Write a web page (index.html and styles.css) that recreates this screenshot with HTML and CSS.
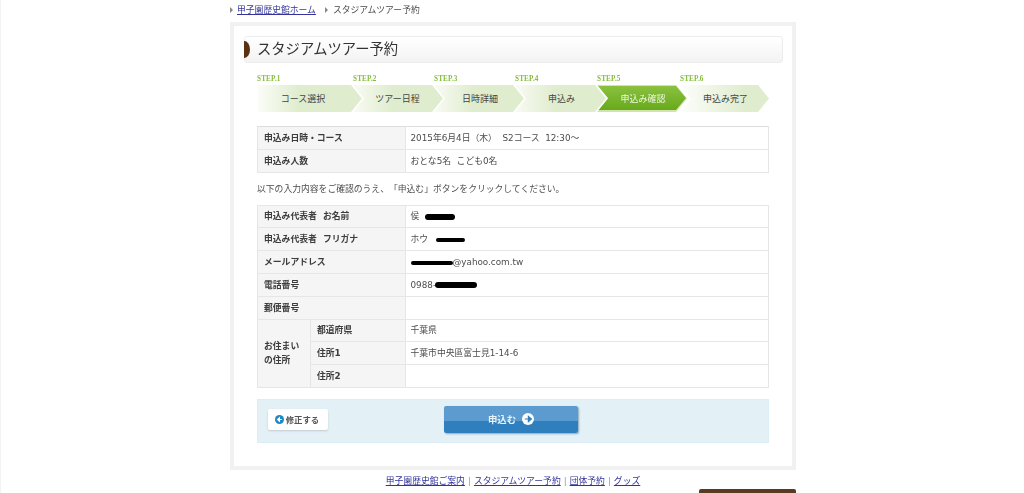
FILE: index.html
```html
<!DOCTYPE html>
<html lang="ja">
<head>
<meta charset="utf-8">
<title>スタジアムツアー予約</title>
<link rel="stylesheet" href="styles.css">
</head>
<body>
<div class="page">
  <nav class="crumbs">
    <span class="tri"></span><a href="#">甲子園歴史館ホーム</a>
    <span class="tri tri-second"></span><span>スタジアムツアー予約</span>
  </nav>
  <main class="card">
    <h1 class="title">スタジアムツアー予約</h1>
    <div class="body">
      <ol class="steps">
        <li class="step s1"><span class="step-label">STEP.1</span><span class="arrow first">コース選択</span></li>
        <li class="step s2"><span class="step-label">STEP.2</span><span class="arrow shift">ツアー日程</span></li>
        <li class="step s2"><span class="step-label">STEP.3</span><span class="arrow">日時詳細</span></li>
        <li class="step s4"><span class="step-label">STEP.4</span><span class="arrow">申込み</span></li>
        <li class="step s5"><span class="step-label">STEP.5</span><span class="arrow active">申込み確認</span></li>
        <li class="step s6"><span class="step-label">STEP.6</span><span class="arrow last">申込み完了</span></li>
      </ol>

      <table class="info first-table">
        <colgroup><col class="c-label"><col class="c-value"></colgroup>
        <tr><th>申込み日時・コース</th><td>2015年6月4日（木）&nbsp; S2コース&nbsp; 12:30～</td></tr>
        <tr><th>申込み人数</th><td>おとな5名&nbsp; こども0名</td></tr>
      </table>

      <p class="note">以下の入力内容をご確認のうえ、「申込む」ボタンをクリックしてください。</p>

      <table class="info">
        <colgroup><col class="c-group"><col class="c-sub"><col class="c-value"></colgroup>
        <tr><th colspan="2">申込み代表者&nbsp; お名前</th><td>侯<span class="blot b1"></span></td></tr>
        <tr><th colspan="2">申込み代表者&nbsp; フリガナ</th><td>ホウ<span class="blot b2"></span></td></tr>
        <tr><th colspan="2">メールアドレス</th><td><span class="blot b3"></span>@yahoo.com.tw</td></tr>
        <tr><th colspan="2">電話番号</th><td>0988-<span class="blot b4"></span></td></tr>
        <tr><th colspan="2">郵便番号</th><td></td></tr>
        <tr><th rowspan="3" class="group">お住まい<br>の住所</th><th>都道府県</th><td>千葉県</td></tr>
        <tr><th>住所1</th><td>千葉市中央區富士見1-14-6</td></tr>
        <tr><th>住所2</th><td></td></tr>
      </table>

      <div class="actions">
        <button class="back" type="button">
          <svg class="ico" viewBox="0 0 10 10" width="9" height="9"><circle cx="5" cy="5" r="5" fill="#1b87c9"/><path d="M7.6 5H4.4M5 3 2.8 5 5 7Z" fill="#fff" stroke="#fff" stroke-width="1.2"/></svg>
          修正する
        </button>
        <button class="submit" type="button">
          申込む
          <svg class="ico" viewBox="0 0 12 12" width="12" height="12"><circle cx="6" cy="6" r="6" fill="#fff"/><path d="M2.8 6H7M6.4 3.4 9.4 6 6.4 8.6Z" fill="#2f7fbf" stroke="#2f7fbf" stroke-width="1.2"/></svg>
        </button>
      </div>
    </div>
  </main>
  <footer class="links">
    <a href="#">甲子園歴史館ご案内</a><span class="sep">|</span><a href="#">スタジアムツアー予約</a><span class="sep">|</span><a href="#">団体予約</a><span class="sep">|</span><a href="#">グッズ</a>
  </footer>
  <div class="tail"></div>
</div>
</body>
</html>
```
FILE: styles.css
```css
* { box-sizing: border-box; }
html, body { margin: 0; padding: 0; height: 493px; overflow: hidden; background: #fff; }
body {
  border-left: 1px solid #f3f3f3;
  font-family: "DejaVu Sans", "Noto Sans CJK JP", sans-serif;
  font-size: 8.8px;
  color: #444;
  text-spacing-trim: space-all;
}
.page { width: 566px; margin-left: 229px; filter: blur(.3px); }
a { color: #33339a; text-decoration: underline; }

.crumbs { display: flex; align-items: center; height: 22px; padding-bottom: 3px; color: #4a4a4a; line-height: 12px; font-size: 8.8px; }
.tri { width: 0; height: 0; margin-right: 4px; border-left: 3px solid #888; border-top: 3px solid transparent; border-bottom: 3px solid transparent; }
.tri-second { margin-left: 9px; margin-right: 5px; }

.card { height: 448px; padding: 10px 9px 0 10px; border: 4px solid #f1f1f1; background: #fff; }
.title {
  position: relative;
  height: 27px;
  margin: 0;
  padding-left: 12px;
  border: 1px solid #ededed;
  border-radius: 3px;
  background: linear-gradient(#fff, #f3f3f3);
  font-size: 14.3px;
  font-weight: normal;
  line-height: 24px;
  color: #333;
}
.title::before {
  content: "";
  position: absolute;
  left: -1px;
  top: 4px;
  width: 6px;
  height: 17px;
  border-radius: 0 6px 6px 0 / 0 9px 9px 0;
  background: #5a3212;
}
.body { margin: 0 14px 0 13px; }

.steps { display: flex; margin: 12px 0 0; padding: 0; list-style: none; }
.step { display: flex; flex-direction: column; flex: none; }
.s1 { width: 96px; }
.s2 { width: 81px; }
.s4 { width: 82px; }
.s5 { width: 83px; }
.s6 { width: 89px; }
.step-label { height: 10px; font-family: "Liberation Serif", serif; font-size: 7.2px; font-weight: bold; line-height: 9px; letter-spacing: .15px; color: #84bd3a; }
.arrow {
  display: flex;
  align-items: center;
  justify-content: center;
  width: calc(100% + 9px);
  height: 27px;
  padding: 0 4px 0 6px;
  background: linear-gradient(90deg, #f9fbf4, #dfeccd 45%, #dfeccd);
  clip-path: polygon(0 0, calc(100% - 11px) 0, 100% 50%, calc(100% - 11px) 100%, 0 100%, 11px 50%);
  font-size: 9px;
  color: #444;
}
.first { clip-path: polygon(0 0, calc(100% - 11px) 0, 100% 50%, calc(100% - 11px) 100%, 0 100%); background: linear-gradient(90deg, #fbfdf8, #dfeccd 40%); margin-left: 1px; width: 104px; padding: 0 18px 0 4px; }
.shift { padding: 0 7px 0 6px; }
.last { width: 100%; background: linear-gradient(90deg, #fdfefb, #dfeccd 75%); }
.active {
  position: relative;
  z-index: 1;
  width: 90px;
  background: #cfe5ab;
  color: #eef6e0;
}
.active::before {
  content: "";
  position: absolute;
  inset: 1px 1px 2px 1px;
  z-index: -1;
  background: linear-gradient(#8ac13f, #68a91c);
  clip-path: polygon(0 0, calc(100% - 10px) 0, 100% 50%, calc(100% - 10px) 100%, 0 100%, 10px 50%);
}

.info { width: 100%; border-collapse: collapse; table-layout: fixed; }
.c-label { width: 148px; }
.c-group { width: 53px; }
.c-sub { width: 95px; }
.first-table { margin-top: 14px; }
.first-table tr:first-child > * { border-top: 1px solid #ddd; }
.info th, .info td { height: 22.8px; padding: 0 0 0 6px; border: 1px solid #e6e6e6; font-size: 8.8px; line-height: 14px; text-align: left; vertical-align: middle; }
.info th { background: #f5f5f5; font-weight: bold; color: #3d3d3d; }
.info td { padding-left: 4.5px; background: #fff; color: #4d4d4d; font-weight: normal; }

.note { display: flex; align-items: center; height: 32px; margin: 0; color: #4d4d4d; }

.blot { display: inline-block; height: 5px; background: #000; border-radius: 3px; vertical-align: middle; }
.b1 { width: 30px; height: 6px; margin-left: 6px; }
.b2 { width: 29px; height: 4px; margin-left: 8px; }
.b3 { width: 42px; height: 4px; }
.b4 { width: 42px; height: 6px; margin-left: -1px; }

.actions { display: flex; align-items: center; height: 44px; margin-top: 11px; padding: 0 0 3px 10px; border: 1px solid #dcedf5; background: #e3f1f7; }
.back {
  display: flex;
  align-items: center;
  justify-content: center;
  gap: 2px;
  width: 60px;
  height: 21px;
  padding: 0 2px 0 0;
  border: 0;
  border-radius: 2px;
  background: #fff;
  box-shadow: 0 1px 2px #c3c9cc;
  font: bold 8.4px "DejaVu Sans", "Noto Sans CJK JP", sans-serif;
  color: #555;
}
.submit {
  display: flex;
  align-items: center;
  justify-content: center;
  gap: 6px;
  width: 134px;
  height: 27px;
  margin-left: 116px;
  padding: 0;
  border: 0;
  border-radius: 2px;
  background: linear-gradient(#5b9bcf 0 55%, #2f7fbf 55%);
  box-shadow: 1px 1px 2px #8ba7b8;
  font: bold 9.4px "DejaVu Sans", "Noto Sans CJK JP", sans-serif;
  color: #e8f1f8;
}

.links { display: flex; justify-content: center; height: 19px; padding-top: 5px; line-height: 12px; font-size: 8.8px; }
.sep { margin: 0 3px; color: #999; }
.tail { width: 97px; height: 4px; margin-left: auto; border-radius: 2px 2px 0 0; background: #5a3a22; }
```
